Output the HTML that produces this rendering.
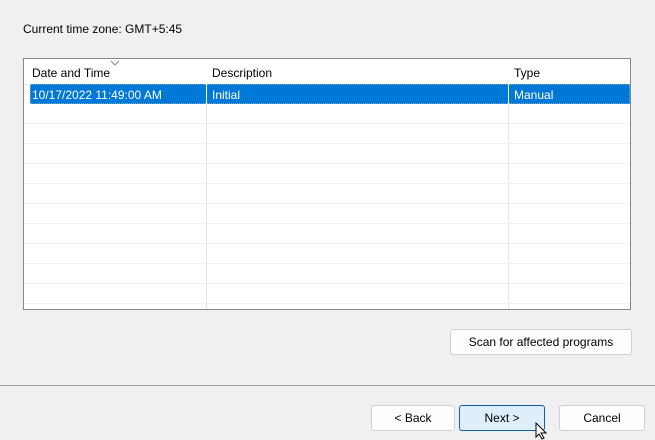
<!DOCTYPE html>
<html><head><style>
body{margin:0;width:655px;height:439px;background:#f0f0f0;font-family:"Liberation Sans",sans-serif;font-size:12px;color:#000;position:relative;overflow:hidden}
.a{position:absolute}
.tbl{left:23px;top:58px;width:606px;height:250px;border:1px solid #828790;background:#fff}
.hd{top:0;height:25px;width:100%;border-bottom:1px solid #e5e5e5;background:#fff}
.c{position:absolute;top:7px}
.vl{position:absolute;top:0;width:1px;background:#e5e5e5;height:250px}
.row{position:absolute;left:0;width:606px;height:1px;background:#f0f0f0}
.sel{left:6px;top:25px;width:598px;height:18px;background:#0078d7;color:#fff;border:1px dotted #7ab}
.btn{position:absolute;background:#fdfdfd;border:1px solid #d0d0d0;border-radius:3px;text-align:center;line-height:24px;font-size:12px}
</style></head><body>
<div class="a" style="left:23px;top:22px">Current time zone: GMT+5:45</div>
<div class="a tbl">
 <div class="vl" style="left:182px"></div>
 <div class="vl" style="left:484px"></div>
 <div class="a hd"></div>
 <div class="c" style="left:8px">Date and Time</div>
 <div class="c" style="left:188px">Description</div>
 <div class="c" style="left:490px">Type</div>
 <svg class="a" style="left:86px;top:1px" width="10" height="6"><path d="M1 1L5 5L9 1" stroke="#888" fill="none"/></svg>
 <div class="a sel"></div>
 <div class="a" style="left:8px;top:29px;color:#fff">10/17/2022 11:49:00 AM</div>
 <div class="a" style="left:188px;top:29px;color:#fff">Initial</div>
 <div class="a" style="left:490px;top:29px;color:#fff">Manual</div>
 <div class="a" style="left:182px;top:25px;width:1px;height:20px;background:#fff"></div>
 <div class="a" style="left:484px;top:25px;width:1px;height:20px;background:#fff"></div>
 <div class="row" style="top:64px"></div>
 <div class="row" style="top:84px"></div>
 <div class="row" style="top:104px"></div>
 <div class="row" style="top:124px"></div>
 <div class="row" style="top:144px"></div>
 <div class="row" style="top:164px"></div>
 <div class="row" style="top:184px"></div>
 <div class="row" style="top:204px"></div>
 <div class="row" style="top:224px"></div>
 <div class="row" style="top:244px"></div>
</div>
<div class="btn" style="left:450px;top:329px;width:180px;height:24px">Scan for affected programs</div>
<div class="a" style="left:0;top:385px;width:655px;height:1px;background:#a0a0a0"></div>
<div class="btn" style="left:371px;top:405px;width:82px;height:24px">&lt; Back</div>
<div class="btn" style="left:459px;top:405px;width:84px;height:24px;background:#e0eef9;border-color:#0a5fa8">Next &gt;</div>
<div class="btn" style="left:559px;top:405px;width:84px;height:24px">Cancel</div>
<svg class="a" style="left:535px;top:422px" width="16" height="18"><path d="M1 1L1 15L4 12L7 17L9 16L6 11L11 11Z" fill="#fff" stroke="#000"/></svg>
</body></html>
